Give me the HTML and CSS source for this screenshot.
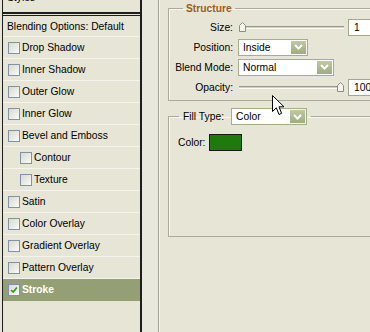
FILE: index.html
```html
<!DOCTYPE html>
<html lang="en">
<head>
    <meta charset="UTF-8">
    <title>Layer Style - Stroke</title>
    <link rel="stylesheet" href="styles.css">
</head>
<body>

<div class="window">
    <!-- 样式列表 -->
    <div class="styles-list">
        <div class="list-head"><span>Styles</span></div>
        <div class="list-item blending">Blending Options: Default</div>
        <div class="list-item"><span class="check"></span>Drop Shadow</div>
        <div class="list-item"><span class="check"></span>Inner Shadow</div>
        <div class="list-item"><span class="check"></span>Outer Glow</div>
        <div class="list-item"><span class="check"></span>Inner Glow</div>
        <div class="list-item"><span class="check"></span>Bevel and Emboss</div>
        <div class="list-item sub"><span class="check"></span>Contour</div>
        <div class="list-item sub"><span class="check"></span>Texture</div>
        <div class="list-item"><span class="check"></span>Satin</div>
        <div class="list-item"><span class="check"></span>Color Overlay</div>
        <div class="list-item"><span class="check"></span>Gradient Overlay</div>
        <div class="list-item"><span class="check"></span>Pattern Overlay</div>
        <div class="list-item active">
            <span class="check checked">
                <svg width="12" height="12" viewBox="0 0 12 12"><path d="M2.5 6 L5 8.5 L9.5 3" fill="none" stroke="#21a121" stroke-width="2"/></svg>
            </span>Stroke
        </div>
    </div>

    <div class="gutter"></div>

    <!-- 描边设置 -->
    <div class="settings">
        <fieldset class="group structure">
            <legend>Structure</legend>
            <div class="form-grid">
                <label>Size:</label>
                <div class="slider">
                    <span class="thumb start"><svg width="7" height="10" viewBox="0 0 7 10"><path d="M0.5 9.5 V3.5 L3.5 0.5 L6.5 3.5 V9.5 Z" fill="#f4f4ee" stroke="#8c8c80"/></svg></span>
                    <span class="track"></span>
                </div>
                <div class="num-box">1</div>

                <label>Position:</label>
                <div class="combo position"><span class="combo-text">Inside</span><span class="combo-arrow"><svg width="9" height="6" viewBox="0 0 9 6"><path d="M1 1 L4.5 4.5 L8 1" fill="none" stroke="#fff" stroke-width="2"/></svg></span></div>
                <div></div>

                <label>Blend Mode:</label>
                <div class="combo blend"><span class="combo-text">Normal</span><span class="combo-arrow"><svg width="9" height="6" viewBox="0 0 9 6"><path d="M1 1 L4.5 4.5 L8 1" fill="none" stroke="#fff" stroke-width="2"/></svg></span></div>
                <div></div>

                <label>Opacity:</label>
                <div class="slider">
                    <span class="track"></span>
                    <span class="thumb end"><svg width="7" height="10" viewBox="0 0 7 10"><path d="M0.5 9.5 V3.5 L3.5 0.5 L6.5 3.5 V9.5 Z" fill="#f4f4ee" stroke="#8c8c80"/></svg></span>
                </div>
                <div class="num-box">100</div>
            </div>
        </fieldset>

        <fieldset class="group fill">
            <legend>
                <span>Fill Type:</span>
                <div class="combo fill-type"><span class="combo-text">Color</span><span class="combo-arrow"><svg width="9" height="6" viewBox="0 0 9 6"><path d="M1 1 L4.5 4.5 L8 1" fill="none" stroke="#fff" stroke-width="2"/></svg></span></div>
            </legend>
            <div class="color-row">
                <span>Color:</span>
                <span class="swatch"></span>
            </div>
        </fieldset>
    </div>

    <!-- 鼠标指针 -->
    <svg class="pointer" width="13" height="21" viewBox="0 0 13 21">
        <path d="M0.5 0.5 L0.5 16.5 L4.3 12.8 L7 19.5 L9.6 18.4 L7 11.8 L12 11.8 Z" fill="#fff" stroke="#000"/>
    </svg>
</div>

</body>
</html>
```

FILE: styles.css
```css
* {
    box-sizing: border-box;
}
body {
    margin: 0;
    background-color: #e6e5d6;
    font-family: 'Liberation Sans', Arial, sans-serif;
    font-size: 10.3px;
    color: #000;
    overflow: hidden;
}
.window {
    position: relative;
    display: flex;
    width: 370px;
    height: 332px;
    overflow: hidden;
}
/* 左侧列表 */
.styles-list {
    width: 140px;
    margin-left: 2px;
    border-left: 1px solid #1e1e1e;
    border-right: 2px solid #1e1e1e;
    flex-shrink: 0;
}
.list-head {
    height: 14px;
    border-bottom: 2px solid #1e1e1e;
    padding-left: 4px;
    overflow: hidden;
}
.list-head span {
    display: block;
    margin-top: -8px;
}
.list-item {
    display: flex;
    align-items: center;
    height: 22px;
    padding-left: 5px;
    border-bottom: 1px solid #f4f4ec;
    white-space: nowrap;
}
.list-item.blending {
    height: 22px;
    padding-left: 4px;
    border-top: 1px solid #1e1e1e;
    margin-top: 1px;
}
.list-item.sub {
    padding-left: 17px;
}
.list-item.active {
    background-color: #959f74;
    color: #fff;
    font-weight: bold;
    border-bottom-color: #959f74;
}
.check {
    width: 12px;
    height: 12px;
    margin-right: 2px;
    border: 1px solid #7f93a8;
    background: linear-gradient(135deg, #d9d9d1, #fafaf7);
    flex-shrink: 0;
    display: flex;
    align-items: center;
    justify-content: center;
}
.check svg {
    display: block;
}
.gutter {
    width: 16px;
    flex-shrink: 0;
    background-color: #e9e8dc;
}
/* 右侧设置 */
.settings {
    flex: 1;
    border-left: 1px solid #a3a292;
    box-shadow: inset 1px 0 0 #f7f7f0;
    padding-left: 9px;
    padding-top: 2px;
}
.group {
    margin: 0 -20px 0 0;
    padding: 0;
    border: 1px solid #acab99;
    box-shadow: inset 1px 1px 0 #f7f7f0;
}
.group legend {
    padding: 0 3px;
    line-height: 13px;
}
.structure legend {
    margin-left: 14px;
    font-weight: bold;
    color: #a3581c;
}
.form-grid {
    display: grid;
    grid-template-columns: 65px 106px 40px;
    grid-auto-rows: 20px;
    column-gap: 4px;
    align-items: center;
    padding: 2px 0 3px 0;
}
.form-grid label {
    text-align: right;
    padding-right: 1px;
    white-space: nowrap;
}
.slider {
    display: flex;
    align-items: center;
    height: 12px;
    padding-left: 1px;
}
.track {
    flex: 1;
    height: 3px;
    border-top: 1px solid #9a9a8c;
    border-bottom: 1px solid #fbfbf6;
    background-color: #d0cfc0;
}
.thumb {
    width: 7px;
    height: 10px;
    display: block;
}
.thumb svg {
    display: block;
}
.num-box {
    height: 17px;
    border: 1px solid #a2a88b;
    background-color: #fff;
    padding-left: 5px;
    line-height: 15px;
    white-space: nowrap;
}
.combo {
    display: flex;
    align-items: center;
    height: 17px;
    border: 1px solid #a4ae8a;
    background-color: #fff;
}
.combo.position {
    width: 70px;
}
.combo.blend {
    width: 96px;
}
.combo.fill-type {
    width: 76px;
    background: linear-gradient(90deg, #fff 70%, #eeeee8);
}
.combo-text {
    flex: 1;
    padding-left: 4px;
}
.combo-arrow {
    width: 15px;
    height: 13px;
    margin-right: 1px;
    background: linear-gradient(#bfcaa4, #9eac7e);
    display: flex;
    align-items: center;
    justify-content: center;
}
.combo-arrow svg {
    display: block;
}
.fill {
    margin-top: 7px;
    padding-bottom: 85px;
}
.fill legend {
    margin-left: 10px;
    padding: 0 4px;
    display: flex;
    align-items: center;
    gap: 7px;
}
.color-row {
    display: flex;
    align-items: center;
    gap: 4px;
    padding: 9px 0 0 9px;
}
.swatch {
    width: 33px;
    height: 17px;
    border: 1px solid #1a1a1a;
    background-color: #1f7a0c;
}
.pointer {
    position: absolute;
    left: 272px;
    top: 95px;
}
```
